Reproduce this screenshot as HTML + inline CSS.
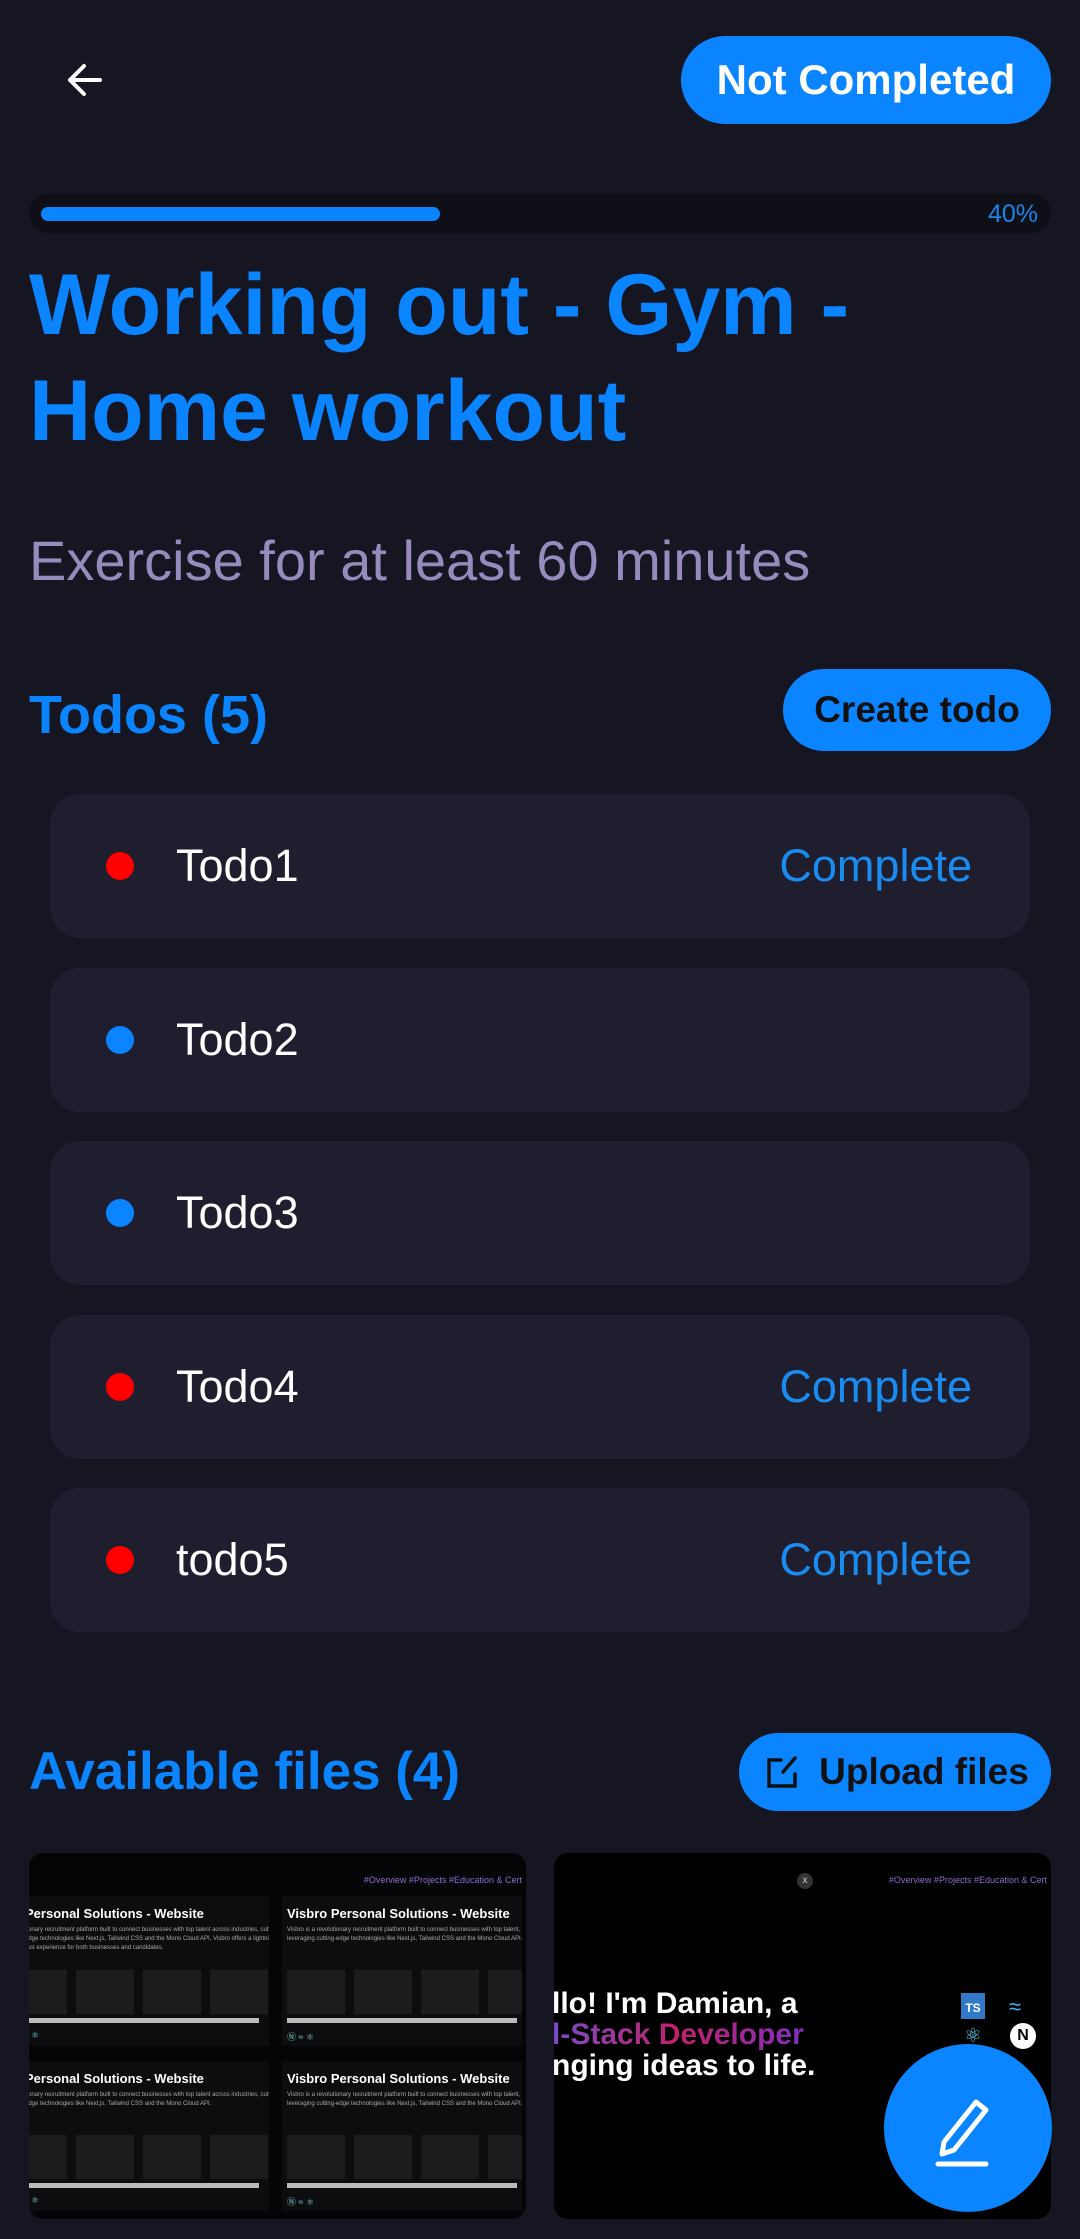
<!DOCTYPE html>
<html><head><meta charset="utf-8">
<style>
*{margin:0;padding:0;box-sizing:border-box}
body{width:1080px;height:2239px;background:#151621;font-family:"Liberation Sans",sans-serif;position:relative;overflow:hidden}
.abs{position:absolute}
.btn{position:absolute;background:#0a84ff;border-radius:50px;display:flex;align-items:center;justify-content:center;font-weight:bold}
.card{position:absolute;left:50px;width:980px;height:144px;background:#1e1e2f;border-radius:30px}
.dot{position:absolute;left:56px;top:58px;width:28px;height:28px;border-radius:50%}
.tt{position:absolute;left:126px;top:44px;font-size:45px;color:#fff;line-height:56px}
.cp{position:absolute;right:58px;top:44px;font-size:45px;color:#1a8cf0;line-height:56px}
.tile{position:absolute;top:1853px;width:497px;height:366px;background:#050507;border-radius:14px;overflow:hidden}
.sub{position:absolute;width:240px;height:150px;background:#0d0d10;overflow:hidden}
.sub h4{position:absolute;top:10px;font-size:13px;color:#fff;white-space:nowrap}
.sub p{position:absolute;top:30px;font-size:6px;line-height:9px;color:#aaa;width:260px}
.sub .l{position:absolute;top:122px;height:5px;background:#bbb;width:230px}
.sub .b{position:absolute;top:74px;width:58px;height:44px;background:#1c1c1e}
.sub .i{position:absolute;top:134px;font-size:9px;color:#7cc;}
</style></head><body>
<svg class="abs" style="left:58px;top:56px" width="50" height="50" viewBox="0 0 50 50"><path d="M42 24H12M26 10L12 24L26 38" stroke="#fff" stroke-width="4" fill="none" stroke-linecap="round" stroke-linejoin="round"/></svg>
<div class="btn" style="left:681px;top:36px;width:370px;height:88px;color:#fff;font-size:42px">Not Completed</div>
<div class="abs" style="left:29px;top:193px;width:1022px;height:40px;background:#0f0f18;border-radius:20px"></div>
<div class="abs" style="left:41px;top:207px;width:399px;height:14px;background:#0a84ff;border-radius:7px"></div>
<div class="abs" style="right:42px;top:200px;font-size:25px;color:#1a84e8">40%</div>
<div class="abs" style="left:29px;top:252px;font-size:86px;font-weight:bold;color:#0a84ff;line-height:106px;width:1040px">Working out - Gym -<br>Home workout</div>
<div class="abs" style="left:29px;top:528px;font-size:56px;color:#958bbd">Exercise for at least 60 minutes</div>
<div class="abs" style="left:29px;top:684px;font-size:54px;font-weight:bold;color:#0a84ff">Todos (5)</div>
<div class="btn" style="left:783px;top:669px;width:268px;height:82px;color:#111;font-size:37px">Create todo</div>
<div class="card" style="top:794px"><div class="dot" style="background:#f00"></div><div class="tt">Todo1</div><div class="cp">Complete</div></div>
<div class="card" style="top:968px"><div class="dot" style="background:#0a84ff"></div><div class="tt">Todo2</div></div>
<div class="card" style="top:1141px"><div class="dot" style="background:#0a84ff"></div><div class="tt">Todo3</div></div>
<div class="card" style="top:1315px"><div class="dot" style="background:#f00"></div><div class="tt">Todo4</div><div class="cp">Complete</div></div>
<div class="card" style="top:1488px"><div class="dot" style="background:#f00"></div><div class="tt">todo5</div><div class="cp">Complete</div></div>
<div class="abs" style="left:29px;top:1741px;font-size:53px;font-weight:bold;color:#0a84ff">Available files (4)</div>
<div class="btn" style="left:739px;top:1733px;width:312px;height:78px;color:#111;font-size:37px"><svg width="40" height="40" viewBox="0 0 40 40" style="margin-right:18px"><path d="M20 8H8v26h26V22M22 20L34 6" stroke="#111" stroke-width="3.5" fill="none" stroke-linecap="round"/></svg>Upload files</div>

<div class="tile" style="left:29px">
 <div class="abs" style="right:4px;top:22px;font-size:9px;color:#8a6fd0">#Overview #Projects #Education &amp; Cert</div>
 <div class="sub" style="left:0;top:43px"><h4 style="left:-4px">Personal Solutions - Website</h4><p style="left:-4px">tionary recruitment platform built to connect businesses with top talent across industries, cutting-edge technologies like Next.js, Tailwind CSS and the Mono Cloud API, Visbro offers a lightning-fast experience for both businesses and candidates.</p><div class="b" style="left:-20px"></div><div class="b" style="left:47px"></div><div class="b" style="left:114px"></div><div class="b" style="left:181px"></div><div class="l" style="left:0"></div><div class="i" style="left:2px">⚛</div></div>
 <div class="sub" style="left:253px;top:43px"><h4 style="left:5px">Visbro Personal Solutions - Website</h4><p style="left:5px">Visbro is a revolutionary recruitment platform built to connect businesses with top talent, leveraging cutting-edge technologies like Next.js, Tailwind CSS and the Mono Cloud API.</p><div class="b" style="left:5px"></div><div class="b" style="left:72px"></div><div class="b" style="left:139px"></div><div class="b" style="left:206px"></div><div class="l" style="left:5px"></div><div class="i" style="left:5px">Ⓝ ≈ ⚛</div></div>
 <div class="sub" style="left:0;top:208px"><h4 style="left:-4px">Personal Solutions - Website</h4><p style="left:-4px">tionary recruitment platform built to connect businesses with top talent across industries, cutting-edge technologies like Next.js, Tailwind CSS and the Mono Cloud API.</p><div class="b" style="left:-20px"></div><div class="b" style="left:47px"></div><div class="b" style="left:114px"></div><div class="b" style="left:181px"></div><div class="l" style="left:0"></div><div class="i" style="left:2px">⚛</div></div>
 <div class="sub" style="left:253px;top:208px"><h4 style="left:5px">Visbro Personal Solutions - Website</h4><p style="left:5px">Visbro is a revolutionary recruitment platform built to connect businesses with top talent, leveraging cutting-edge technologies like Next.js, Tailwind CSS and the Mono Cloud API.</p><div class="b" style="left:5px"></div><div class="b" style="left:72px"></div><div class="b" style="left:139px"></div><div class="b" style="left:206px"></div><div class="l" style="left:5px"></div><div class="i" style="left:5px">Ⓝ ≈ ⚛</div></div>
</div>

<div class="tile" style="left:554px;background:#000">
 <div class="abs" style="right:4px;top:22px;font-size:9px;color:#8a6fd0">#Overview #Projects #Education &amp; Cert</div>
 <div class="abs" style="left:243px;top:20px;width:16px;height:16px;border-radius:50%;background:#333;color:#ccc;font-size:10px;text-align:center;line-height:16px">x</div>
 <div class="abs" style="left:-2px;top:135px;font-size:30px;font-weight:bold;color:#fff;line-height:31px;white-space:nowrap">llo! I'm Damian, a<br><span style="background:linear-gradient(90deg,#7a4cc8,#c0206a,#8030c0);-webkit-background-clip:text;color:transparent">l-Stack Developer</span><br>nging ideas to life.</div>
 <div class="abs" style="left:407px;top:140px;width:24px;height:26px;background:#3178c6;color:#fff;font-size:12px;font-weight:bold;text-align:center;line-height:30px">TS</div>
 <div class="abs" style="left:455px;top:141px;font-size:22px;color:#38bdf8">≈</div>
 <div class="abs" style="left:410px;top:170px;font-size:20px;color:#61dafb">⚛</div>
 <div class="abs" style="left:456px;top:170px;width:26px;height:26px;border-radius:50%;background:#fff;color:#000;font-size:16px;font-weight:bold;text-align:center;line-height:26px">N</div>
</div>

<div class="abs" style="left:884px;top:2044px;width:168px;height:168px;border-radius:50%;background:#0a84ff"></div>
<svg class="abs" style="left:924px;top:2084px" width="88" height="88" viewBox="0 0 88 88"><path d="M20 58L52 18L62 26L30 66L18 70Z" stroke="#fff" stroke-width="5" fill="none" stroke-linejoin="round"/><path d="M14 80H62" stroke="#fff" stroke-width="5" stroke-linecap="round"/></svg>
</body></html>
